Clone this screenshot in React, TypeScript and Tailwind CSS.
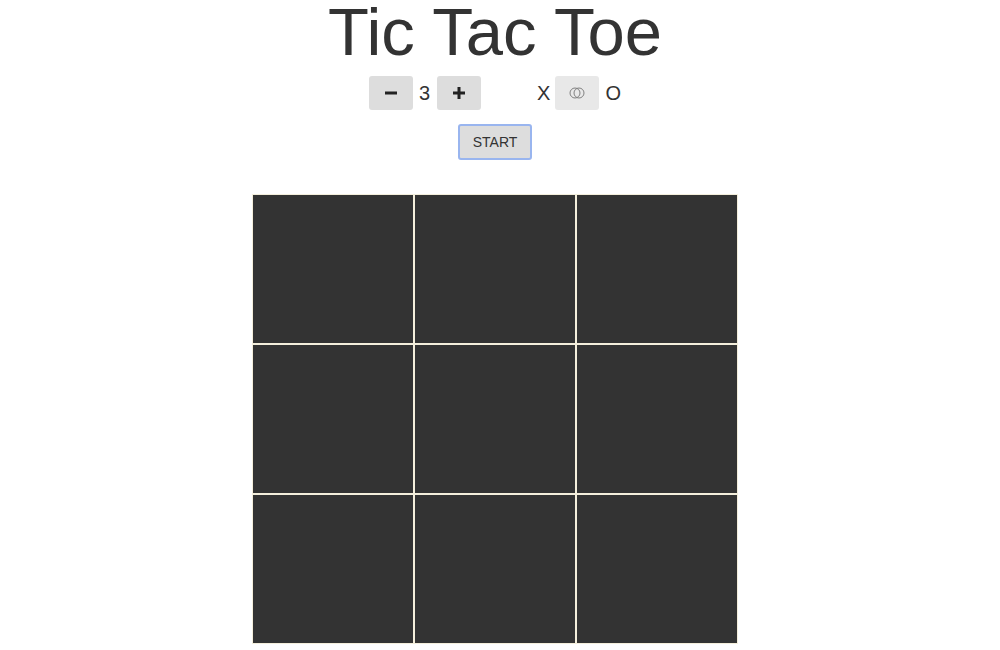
import { useState } from 'react';

function MinusIcon() {
  return (
    <svg width="12" height="12" viewBox="0 0 12 12">
      <rect x="0" y="4.5" width="12" height="3" fill="#222" />
    </svg>
  );
}

function PlusIcon() {
  return (
    <svg width="12" height="12" viewBox="0 0 12 12">
      <rect x="0" y="4.5" width="12" height="3" fill="#222" />
      <rect x="4.5" y="0" width="3" height="12" fill="#222" />
    </svg>
  );
}

function ToggleIcon() {
  return (
    <svg width="16" height="12" viewBox="0 0 16 12" fill="none" stroke="#808080" strokeWidth="1">
      <circle cx="6" cy="6" r="5" />
      <circle cx="10" cy="6" r="5" />
    </svg>
  );
}

export default function App() {
  const [size, setSize] = useState(3);
  const [player, setPlayer] = useState<'X' | 'O'>('X');
  const cells = Array.from({ length: size * size }, (_, i) => i);

  return (
    <div className="flex min-h-[650px] flex-col items-center bg-white pr-[10px] text-[#333]" style={{ fontFamily: '"Liberation Sans", Arial, sans-serif' }}>
      <h1 className="text-[67px] font-normal leading-[64px]">Tic Tac Toe</h1>

      <div className="mt-[12px] flex h-[34px] items-center">
        <button type="button" onClick={() => setSize((s) => Math.max(3, s - 1))} className="flex h-[34px] w-[44px] items-center justify-center rounded-[3px] bg-[#dddddd]">
          <MinusIcon />
        </button>
        <span className="ml-[6px] mr-[7px] text-[20px]">{size}</span>
        <button type="button" onClick={() => setSize((s) => s + 1)} className="flex h-[34px] w-[44px] items-center justify-center rounded-[3px] bg-[#dddddd]">
          <PlusIcon />
        </button>
        <span className="ml-[56px] text-[20px]">X</span>
        <button type="button" onClick={() => setPlayer(player === 'X' ? 'O' : 'X')} className="ml-[5px] mr-[6px] flex h-[34px] w-[44px] items-center justify-center rounded-[3px] bg-[#e8e8e8]">
          <ToggleIcon />
        </button>
        <span className="text-[20px]">O</span>
      </div>

      <button type="button" className="mt-[14px] h-[36px] w-[74px] rounded-[3px] border-2 border-[#99b5ef] bg-[#dddddd] text-[14px] text-[#333]">
        START
      </button>

      <div className="mt-[34px] grid grid-cols-[repeat(3,160px)] gap-[2px] border border-[#f4efdc] bg-[#f4efdc]">
        {cells.slice(0, 9).map((i) => (
          <div key={i} className="h-[148px] w-[160px] bg-[#333333]" />
        ))}
      </div>
    </div>
  );
}
